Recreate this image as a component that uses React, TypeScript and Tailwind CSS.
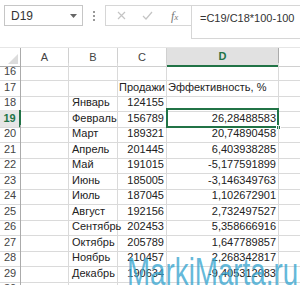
import React from 'react';

const rows: [number, string, string, string][] = [
  [16, '', '', ''],
  [17, '', 'Продажи', 'Эффективность, %'],
  [18, 'Январь', '124155', ''],
  [19, 'Февраль', '156789', '26,28488583'],
  [20, 'Март', '189321', '20,74890458'],
  [21, 'Апрель', '201445', '6,403938285'],
  [22, 'Май', '191015', '-5,177591899'],
  [23, 'Июнь', '185005', '-3,146349763'],
  [24, 'Июль', '187045', '1,102672901'],
  [25, 'Август', '192156', '2,732497527'],
  [26, 'Сентябрь', '202453', '5,358666916'],
  [27, 'Октябрь', '205789', '1,647789857'],
  [28, 'Ноябрь', '210457', '2,268342817'],
  [29, 'Декабрь', '190634', '-9,405312083'],
  [30, '', '', ''],
];

const cols = 'grid grid-cols-[21px_48px_49px_49px_112px_1fr]';

const App: React.FC = () => {
  return (
    <div className="relative w-[300px] h-[285px] overflow-hidden bg-white text-[11px] text-[#222] font-['Liberation_Sans',Arial,sans-serif]">
      {/* Formula bar */}
      <div className="flex h-[47px] pt-[5px] pl-[4px]">
        <div className="flex items-center justify-between w-[79px] h-[21px] border border-[#c6c6c6] pl-[6px] pr-[5px]">
          <span className="text-[12px] text-[#333]">D19</span>
          <svg width="7" height="4" viewBox="0 0 7 4"><path d="M0 0h7L3.5 4z" fill="#666" /></svg>
        </div>
        <div className="flex flex-col justify-center gap-[2px] w-[22px] h-[21px] items-center">
          <span className="w-[2px] h-[2px] bg-[#999]" />
          <span className="w-[2px] h-[2px] bg-[#999]" />
          <span className="w-[2px] h-[2px] bg-[#999]" />
        </div>
        <div className="flex items-center w-[86px] h-[21px] border border-r-0 border-[#d6d6d6]">
          <svg className="ml-[11px]" width="9" height="9" viewBox="0 0 9 9"><path d="M1 1l7 7M8 1L1 8" stroke="#c4c4c4" strokeWidth="1.2" /></svg>
          <svg className="ml-[16px]" width="11" height="9" viewBox="0 0 11 9"><path d="M1 5l3 3 6-7" stroke="#c4c4c4" strokeWidth="1.2" fill="none" /></svg>
          <span className="ml-[18px] italic text-[12px] text-[#777] font-['Liberation_Serif',serif]">f<span className="text-[9px]">x</span></span>
        </div>
        <div className="flex-1 h-[34px] border border-r-0 border-[#d6d6d6] pl-[8px] pt-[4px] text-[11px] text-[#333] whitespace-nowrap">
          =C19/C18*100-100
        </div>
      </div>

      {/* Column headers */}
      <div className={`${cols} h-[16px] border-t border-[#e6e6e6]`}>
        <div className="relative border-r border-b border-[#ababab] bg-white">
          <svg className="absolute right-[2px] bottom-[2px]" width="10" height="10" viewBox="0 0 10 10"><path d="M10 0v10H0z" fill="#dcdcdc" /></svg>
        </div>
        {['A', 'B', 'C'].map(c => (
          <div key={c} className="flex items-center justify-center border-r border-b border-[#d0d0d0] text-[#444]">{c}</div>
        ))}
        <div className="flex items-center justify-center bg-[#e1e1e1] border-r border-[#ababab] border-b-2 border-b-[#217346] text-[#217346] font-bold">D</div>
        <div className="border-b border-[#d0d0d0]" />
      </div>

      {/* Rows */}
      {rows.map(([n, b, c, d], i) => {
        const sel = n === 19;
        return (
          <div key={n} className={`${cols} ${i % 2 === 0 ? 'h-[16px]' : 'h-[15px]'}`}>
            <div className={`flex items-center justify-center border-b border-[#dadada] ${sel ? 'border-r-2 border-r-[#217346] bg-[#e6e6e6] text-[#217346] font-bold' : 'border-r border-r-[#ababab] text-[#444]'}`}>{n}</div>
            <div className="border-r border-b border-[#dadada]" />
            <div className="flex items-center pl-[3px] border-r border-b border-[#dadada] whitespace-nowrap">{b}</div>
            <div className={`flex items-center border-r border-b border-[#dadada] whitespace-nowrap ${n === 17 ? 'pl-[1px]' : 'justify-end pr-[2px]'}`}>{c}</div>
            <div className={`relative flex items-center border-r border-b border-[#dadada] whitespace-nowrap ${n === 17 ? 'pl-[1px]' : 'justify-end pr-[2px]'}`}>
              {d}
              {sel && (
                <div className="absolute -left-px -top-[2px] -right-px -bottom-px border-2 border-[#217346]">
                  <div className="absolute -right-[4px] -bottom-[4px] w-[5px] h-[5px] bg-[#217346] border border-white" />
                </div>
              )}
            </div>
            <div className="border-b border-[#dadada]" />
          </div>
        );
      })}

      {/* Watermark */}
      <div className="absolute left-[127px] top-[253px] origin-left scale-x-[0.73] text-[38px] leading-none text-[#3aa6d0]/80 whitespace-nowrap font-['Liberation_Sans',sans-serif]">
        MarkiMarta.ru
      </div>
    </div>
  );
};

export default App;
